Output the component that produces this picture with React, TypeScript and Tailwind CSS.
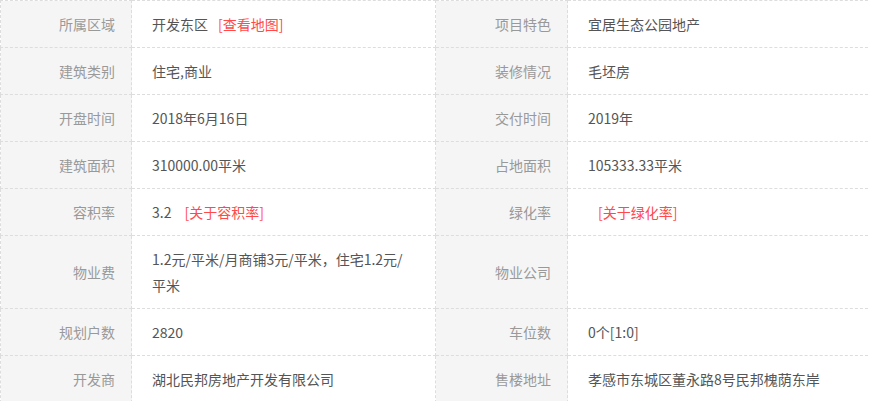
type Cell = { text?: string; link?: string; spaced?: boolean };

const rows: { l1: string; v1: Cell; l2: string; v2: Cell }[] = [
  { l1: '所属区域', v1: { text: '开发东区', link: '[查看地图]' }, l2: '项目特色', v2: { text: '宜居生态公园地产' } },
  { l1: '建筑类别', v1: { text: '住宅,商业' }, l2: '装修情况', v2: { text: '毛坯房' } },
  { l1: '开盘时间', v1: { text: '2018年6月16日' }, l2: '交付时间', v2: { text: '2019年' } },
  { l1: '建筑面积', v1: { text: '310000.00平米' }, l2: '占地面积', v2: { text: '105333.33平米' } },
  { l1: '容积率', v1: { text: '3.2', link: '[关于容积率]', spaced: true }, l2: '绿化率', v2: { text: '', link: '[关于绿化率]' } },
  { l1: '物业费', v1: { text: '1.2元/平米/月商铺3元/平米，住宅1.2元/平米' }, l2: '物业公司', v2: {} },
  { l1: '规划户数', v1: { text: '2820' }, l2: '车位数', v2: { text: '0个[1:0]' } },
  { l1: '开发商', v1: { text: '湖北民邦房地产开发有限公司' }, l2: '售楼地址', v2: { text: '孝感市东城区董永路8号民邦槐荫东岸' } },
];

function Label({ children }: { children: string }) {
  return (
    <td className="border border-dashed border-[#ddd] bg-[#f5f5f5] text-right pr-[16px] py-[10px] text-[#999] align-middle">
      {children}
    </td>
  );
}

function Value({ cell }: { cell: Cell }) {
  return (
    <td className="border border-dashed border-[#ddd] pl-[20px] pr-[20px] py-[10px] text-[#555] align-middle">
      {cell.text}
      {cell.spaced ? ' ' : ''}
      {cell.link && <a className="ml-[10px] text-[#ff4a4a]">{cell.link}</a>}
    </td>
  );
}

export default function App() {
  return (
    <div
      className="w-[869px] h-[401px] overflow-hidden bg-white"
      style={{ fontFamily: '"Noto Sans CJK SC", "Noto Sans", sans-serif' }}
    >
      <table className="border-collapse table-fixed w-[872px] text-[14px] leading-[26px]">
        <colgroup>
          <col className="w-[131px]" />
          <col className="w-[304px]" />
          <col className="w-[132px]" />
          <col className="w-[305px]" />
        </colgroup>
        <tbody>
          {rows.map((r) => (
            <tr key={r.l1}>
              <Label>{r.l1}</Label>
              <Value cell={r.v1} />
              <Label>{r.l2}</Label>
              <Value cell={r.v2} />
            </tr>
          ))}
        </tbody>
      </table>
    </div>
  );
}
